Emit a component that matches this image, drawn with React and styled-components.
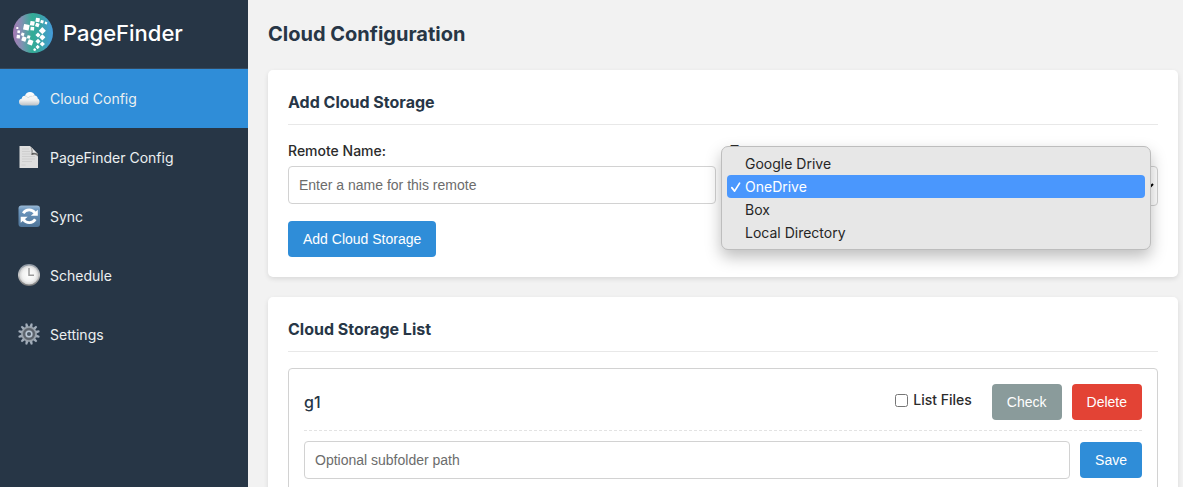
import React from "react";
import styled, { createGlobalStyle } from "styled-components";

const ui = `Inter, "Liberation Sans", sans-serif`;
const control = `"Liberation Sans", Arial, sans-serif`;

const GlobalStyle = createGlobalStyle`
  *, *::before, *::after { box-sizing: border-box; }
  body { margin: 0; background: #f2f2f2; color: #2b2b2b; font-family: ${ui}; font-size: 14px; line-height: 20px; }
  h1, h2, h3, ul { margin: 0; padding: 0; }
  ul { list-style: none; }
`;

const Layout = styled.div`
  display: flex;
  min-height: 100vh;
`;

const Sidebar = styled.aside`
  flex: 0 0 248px;
  background: #273646;
`;

const Brand = styled.div`
  display: flex;
  align-items: center;
  gap: 10px;
  height: 69px;
  padding: 0 13px 3px;
  border-bottom: 1px solid #34495e;
  color: #fff;
  font-size: 22px;
  font-weight: 500;
  line-height: 28px;

  svg { width: 40px; height: 40px; }
`;

const NavLink = styled.a`
  display: flex;
  align-items: center;
  gap: 8px;
  height: 59px;
  padding: 0 18px;
  color: #ecf0f1;
  background: ${(p) => (p.$active ? "#2f8dd8" : "transparent")};
  text-decoration: none;

  svg { width: 24px; height: 24px; flex: none; }
`;

const Main = styled.main`
  flex: 1;
  min-width: 0;
  padding: 20px 5px 20px 20px;
`;

const PageTitle = styled.h1`
  margin-bottom: 22px;
  color: #273646;
  font-size: 20px;
  font-weight: 700;
  line-height: 28px;
`;

const Card = styled.section`
  margin-bottom: 20px;
  padding: 20px;
  background: #fff;
  border-radius: 5px;
  box-shadow: 0 2px 5px rgba(0, 0, 0, 0.1);
`;

const CardTitle = styled.h2`
  margin-bottom: 16px;
  padding-bottom: 10px;
  border-bottom: 1px solid #e8e8e8;
  color: #273646;
  font-size: 16px;
  font-weight: 700;
  line-height: 24px;
`;

const FormRow = styled.div`
  display: grid;
  grid-template-columns: 1fr 1fr;
  gap: 14px;
  margin-bottom: 15px;
`;

const Field = styled.div`
  position: relative;
`;

const Label = styled.label`
  display: block;
  margin-bottom: 5px;
  font-weight: 500;
`;

const TextInput = styled.input`
  display: block;
  width: 100%;
  height: 38px;
  padding: 0 10px;
  background: #fff;
  border: 1px solid #d2d2d2;
  border-radius: 4px;
  color: #2b2b2b;
  font: 14px/20px ${control};

  &::placeholder { color: #6c6c6c; opacity: 1; }
`;

const Select = styled.select`
  display: block;
  width: 100%;
  height: 40px;
  padding: 0 6px;
  background: #fff;
  border: 1px solid #d2d2d2;
  border-radius: 4px;
  color: #000;
  font: 14px/20px ${control};
`;

const Menu = styled.ul`
  position: absolute;
  top: 5px;
  right: 7px;
  left: -9px;
  padding: 5px;
  background: #e7e7e7;
  border: 1px solid #bdbdbd;
  border-radius: 7px;
  box-shadow: 0 7px 16px rgba(0, 0, 0, 0.26);
`;

const MenuItem = styled.li`
  display: flex;
  align-items: center;
  height: 23px;
  padding-left: 3px;
  border-radius: 4px;
  background: ${(p) => (p.$selected ? "#4a97fd" : "transparent")};
  color: ${(p) => (p.$selected ? "#fff" : "#262626")};
`;

const CheckSlot = styled.span`
  flex: 0 0 15px;
  height: 12px;

  svg { display: block; width: 12px; height: 12px; }
`;

const tones = { primary: "#2f8dd8", neutral: "#8a9b9b", danger: "#e34335" };

const Button = styled.button`
  flex: none;
  height: 36px;
  padding: 0 15px;
  border: 0;
  border-radius: 4px;
  background: ${(p) => tones[p.$tone || "primary"]};
  color: #fff;
  font: 14px/20px ${control};
`;

const RemoteItem = styled.article`
  padding: 15px;
  border: 1px solid #d2d2d2;
  border-radius: 4px;
`;

const RemoteHeader = styled.header`
  display: flex;
  align-items: center;
  gap: 10px;
  margin-bottom: 10px;
  padding-bottom: 10px;
  border-bottom: 1px dashed #e3e3e3;
`;

const RemoteName = styled.h3`
  flex: 1;
  color: #273646;
  font-size: 16px;
  font-weight: 500;
  line-height: 24px;
`;

const CheckLabel = styled.label`
  display: flex;
  align-items: center;
  gap: 5px;
  margin-right: 10px;
  padding-bottom: 4px;
  font-weight: 500;

  input { width: 13px; height: 13px; margin: 0; }
`;

const PathRow = styled.div`
  display: flex;
  align-items: center;
  gap: 10px;
`;

const logoSquares = [
  [52, 84, 6, 0], [56, 95, 8, 10], [55, 110, 10, 8], [68, 103, 9, 20], [72, 117, 13, 20],
  [86, 111, 9, 15], [91, 127, 15, 20], [79, 82, 17, 12], [97, 70, 13, 10], [97, 86, 11, 5],
  [113, 60, 12, 10], [112, 75, 11, 20], [126, 65, 9, 15], [138, 69, 7, 20],
  [127, 92, 15, 45], [114, 105, 11, 45], [127, 112, 13, 45], [114, 124, 11, 45],
  [127, 132, 11, 45], [113, 141, 9, 45], [104, 149, 7, 30],
];

const Logo = () => (
  <svg viewBox="39 39 120 120" aria-hidden="true">
    <defs>
      <linearGradient id="logo">
        <stop offset="0" stopColor="#a878b4" />
        <stop offset="0.22" stopColor="#8091b2" />
        <stop offset="0.48" stopColor="#32ad96" />
        <stop offset="0.68" stopColor="#3aa4a5" />
        <stop offset="1" stopColor="#459bdc" />
      </linearGradient>
    </defs>
    <circle cx="99" cy="99" r="60" fill="url(#logo)" />
    {logoSquares.map(([x, y, s, r]) => (
      <rect key={`${x}-${y}`} x={x - s / 2} y={y - s / 2} width={s} height={s} rx="1" fill="#fff" transform={`rotate(${r} ${x} ${y})`} />
    ))}
  </svg>
);

const CloudIcon = () => (
  <svg viewBox="0 0 24 24" aria-hidden="true">
    <defs>
      <linearGradient id="cloud" x2="0" y2="1">
        <stop offset="0" stopColor="#fff" />
        <stop offset="0.6" stopColor="#f1f1f1" />
        <stop offset="1" stopColor="#b9bfc4" />
      </linearGradient>
    </defs>
    <path d="M5 18.5C2.5 18.5 1 17 1 15c0-1.9 1.2-3.1 2.9-3.4.1-1.9 1.4-2.9 3-2.7C7.7 6.5 9.5 5 12 5c2.5 0 4.2 1.4 4.8 3.4 1.7.2 2.8 1.3 2.9 3 1.2.7 1.8 1.8 1.8 3.3 0 2.3-1.4 3.8-3.7 3.8Z" fill="url(#cloud)" />
    <path d="M7 9c1.5 0 2.5.7 3 1.8m.2.1c1-1.5 2.7-1.9 4.2-1.4M15 9.2c.5-.5 1.1-.7 1.8-.8" fill="none" stroke="#d0d4d7" strokeWidth=".8" />
  </svg>
);

const PageIcon = () => (
  <svg viewBox="0 0 24 24" aria-hidden="true">
    <defs>
      <linearGradient id="fold" x1="0" y1="1" x2="1" y2="0">
        <stop offset="0" stopColor="#333" />
        <stop offset="0.55" stopColor="#777" />
        <stop offset="1" stopColor="#222" />
      </linearGradient>
    </defs>
    <path d="M1.5 0h10.5L20 8v14H1.5Z" fill="#dedede" />
    <path d="M4 3h7M4 5.5h8M4 8h9M4 10.5h13M4 13h13M4 15.5h10M3.5 19h4" stroke="#cccccc" strokeWidth=".9" />
    <path d="M12 0c2 2 2 5 1.4 9 2.6-1 4.7-.7 6.6 1.5V8Z" fill="url(#fold)" />
    <path d="M12.8.8c2 2.3 1.9 4 1.5 6.2 2-.6 3.9-.4 5.1.7Z" fill="#e9e9e9" />
  </svg>
);

const SyncIcon = () => (
  <svg viewBox="0 0 24 24" aria-hidden="true">
    <defs>
      <linearGradient id="sync" x2="0" y2="1">
        <stop offset="0" stopColor="#9bbad6" />
        <stop offset="0.2" stopColor="#6e98c0" />
        <stop offset="1" stopColor="#4e7498" />
      </linearGradient>
    </defs>
    <rect x=".5" y=".5" width="21.5" height="21.5" rx="3" fill="url(#sync)" />
    <path d="M5.2 8.2A7 7 0 0 1 17 8M17.3 14.3A7 7 0 0 1 5.5 14.5" fill="none" stroke="#fff" strokeWidth="2.8" />
    <path d="M12.8 10.8H19.8V4.8ZM9.7 11.8H2.7V17.8Z" fill="#fff" />
  </svg>
);

const ClockIcon = () => (
  <svg viewBox="0 0 24 24" aria-hidden="true">
    <defs>
      <linearGradient id="rim" x2="0" y2="1">
        <stop offset="0" stopColor="#8b95a1" />
        <stop offset="0.5" stopColor="#c8c8c8" />
        <stop offset="1" stopColor="#777" />
      </linearGradient>
      <radialGradient id="face">
        <stop offset="0" stopColor="#fff" />
        <stop offset="0.7" stopColor="#f1f1f1" />
        <stop offset="1" stopColor="#d2d2d2" />
      </radialGradient>
    </defs>
    <circle cx="11" cy="11" r="11" fill="url(#rim)" />
    <circle cx="11" cy="11" r="9.5" fill="url(#face)" />
    <path d="M11 4v7.3h5" fill="none" stroke="#9b9b9b" strokeWidth="1.5" />
  </svg>
);

const GearIcon = () => (
  <svg viewBox="0 0 24 24" aria-hidden="true">
    {Array.from({ length: 12 }, (_, i) => (
      <path key={i} d="m9.5 4 .6-3.8h1.8l.6 3.8Z" fill="#a3aebb" transform={`rotate(${i * 30 + 15} 11 11)`} />
    ))}
    <circle cx="11" cy="11" r="7" fill="#6d747c" stroke="#9aa3ac" strokeWidth="1.6" />
    <circle cx="11" cy="11" r="5" fill="none" stroke="#5b626b" strokeWidth="1.4" />
    <circle cx="11" cy="11" r="2.8" fill="#4b5763" stroke="#bac7d5" strokeWidth="1.5" />
  </svg>
);

const navItems = [
  { label: "Cloud Config", icon: CloudIcon, active: true },
  { label: "PageFinder Config", icon: PageIcon },
  { label: "Sync", icon: SyncIcon },
  { label: "Schedule", icon: ClockIcon },
  { label: "Settings", icon: GearIcon },
];

const providers = ["Google Drive", "OneDrive", "Box", "Local Directory"];

export default function App() {
  return (
    <>
      <GlobalStyle />
      <Layout>
        <Sidebar>
          <Brand><Logo />PageFinder</Brand>
          <nav>
            {navItems.map(({ label, icon: Icon, active }) => (
              <NavLink key={label} href="#" $active={active}><Icon />{label}</NavLink>
            ))}
          </nav>
        </Sidebar>
        <Main>
          <PageTitle>Cloud Configuration</PageTitle>
          <Card>
            <CardTitle>Add Cloud Storage</CardTitle>
            <FormRow>
              <Field>
                <Label htmlFor="remote-name">Remote Name:</Label>
                <TextInput id="remote-name" placeholder="Enter a name for this remote" />
              </Field>
              <Field>
                <Label htmlFor="remote-type">Type:</Label>
                <Select id="remote-type" defaultValue="OneDrive">
                  {providers.map((p) => <option key={p}>{p}</option>)}
                </Select>
                <Menu role="listbox" aria-label="Type">
                  {providers.map((p) => (
                    <MenuItem key={p} role="option" aria-selected={p === "OneDrive"} $selected={p === "OneDrive"}>
                      <CheckSlot>
                        {p === "OneDrive" && (
                          <svg viewBox="0 0 12 12" aria-hidden="true">
                            <path d="m1.8 6.6 2.8 3.5 5-8" fill="none" stroke="#fff" strokeWidth="1.7" strokeLinecap="round" strokeLinejoin="round" />
                          </svg>
                        )}
                      </CheckSlot>
                      {p}
                    </MenuItem>
                  ))}
                </Menu>
              </Field>
            </FormRow>
            <Button type="button">Add Cloud Storage</Button>
          </Card>
          <Card>
            <CardTitle>Cloud Storage List</CardTitle>
            <RemoteItem>
              <RemoteHeader>
                <RemoteName>g1</RemoteName>
                <CheckLabel><input type="checkbox" />List Files</CheckLabel>
                <Button type="button" $tone="neutral">Check</Button>
                <Button type="button" $tone="danger">Delete</Button>
              </RemoteHeader>
              <PathRow>
                <TextInput aria-label="Subfolder path" placeholder="Optional subfolder path" />
                <Button type="button">Save</Button>
              </PathRow>
            </RemoteItem>
          </Card>
        </Main>
      </Layout>
    </>
  );
}
